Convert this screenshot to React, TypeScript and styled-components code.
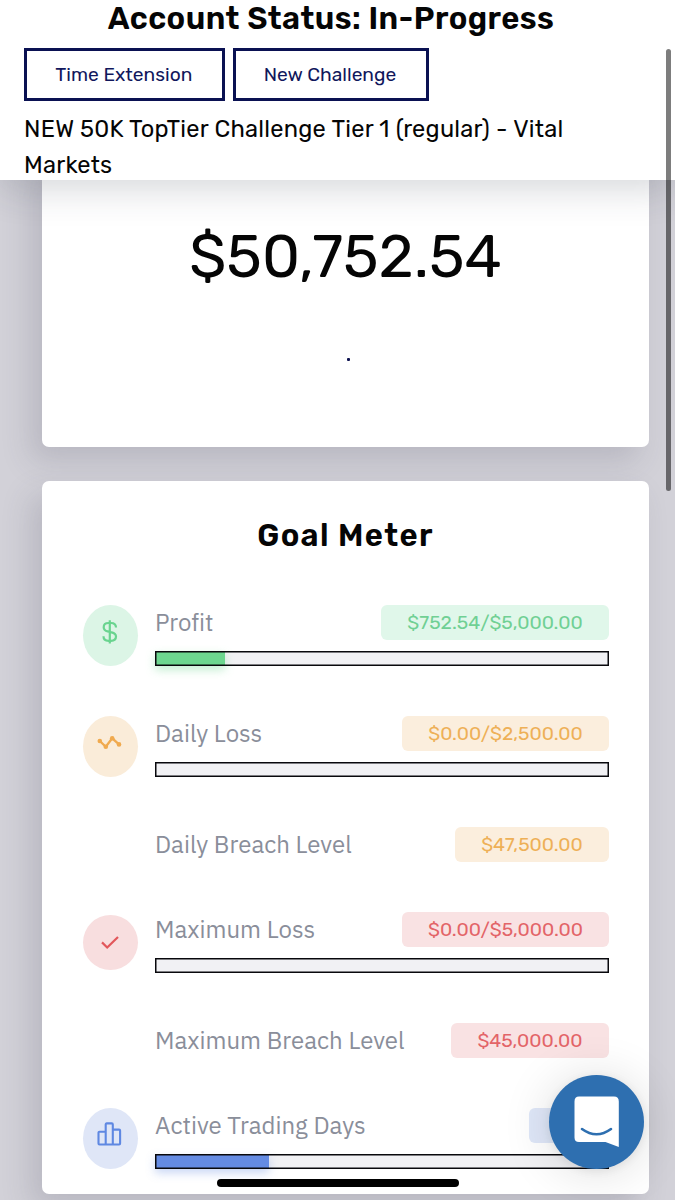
import React from "react";
import styled, { createGlobalStyle } from "styled-components";

const GlobalStyle = createGlobalStyle`
  *, *::before, *::after { box-sizing: border-box; }
  body { margin: 0; background: #d2d1d8; }
`;

const rubik = `Rubik, Roboto, sans-serif`;
const plex = `"IBM Plex Sans", Roboto, sans-serif`;

const Page = styled.div`
  position: relative;
  height: 1200px;
  overflow: hidden;
  display: flex;
  flex-direction: column;
  background: #d2d1d8;
  color: #050505;
  font-family: ${rubik};
`;

const Header = styled.header`
  position: relative;
  z-index: 2;
  flex: none;
  height: 180px;
  padding: 0 24px;
  background: #fff;
  box-shadow: 0 8px 36px rgba(40, 50, 66, 0.2);
`;

const Title = styled.h1`
  margin: 0 0 10.5px -13px;
  height: 37px;
  line-height: 37px;
  font-size: 31px;
  font-weight: 600;
  letter-spacing: 0.44px;
  text-align: center;
  white-space: nowrap;
`;

const Actions = styled.div`
  display: flex;
  gap: 8px;
`;

const OutlineButton = styled.button<{ $width: number }>`
  width: ${(p) => p.$width}px;
  height: 53px;
  padding: 0 1px 0 0;
  border: 3px solid #0a1152;
  background: #fff;
  color: #11175c;
  font: 400 19.2px ${rubik};
  white-space: nowrap;
`;

const AccountName = styled.p`
  margin: 11.5px 0 0;
  width: 600px;
  font-size: 23.6px;
  line-height: 35.5px;
  letter-spacing: 0.24px;
`;

const Content = styled.main`
  flex: none;
  display: flex;
  flex-direction: column;
  gap: 34.5px;
  padding: 0 26px 0 42px;
`;

const Card = styled.section`
  border-radius: 7px;
  background: #fff;
  box-shadow: -11px 14px 30px rgba(64, 66, 88, 0.18);
`;

const BalanceCard = styled(Card)`
  height: 296.5px;
  margin-top: -30px;
  padding-top: 68.5px;
  display: flex;
  flex-direction: column;
  align-items: center;
`;

const Balance = styled.div`
  height: 74px;
  line-height: 75px;
  font-size: 60px;
`;

const Dot = styled.span`
  width: 3px;
  height: 3px;
  margin: 65.5px 0 0 5px;
  border-radius: 1px;
  background: #0d124f;
`;

const GoalCard = styled(Card)`
  height: 712.5px;
  padding: 34px 40px 0 41px;
`;

const GoalTitle = styled.h2`
  margin: 0 0 49px -1px;
  height: 41px;
  line-height: 41px;
  font-size: 31px;
  font-weight: 600;
  letter-spacing: 1.35px;
  text-align: center;
`;

const Goals = styled.div`
  display: flex;
  flex-direction: column;
  gap: 50px;
`;

const GoalRow = styled.div`
  display: grid;
  grid-template-columns: 55px 1fr;
  column-gap: 17px;
  align-items: center;
`;

const Badge = styled.div<{ $bg: string; $round?: boolean }>`
  width: 55px;
  height: ${(p) => (p.$round ? 55 : 61)}px;
  display: flex;
  justify-content: center;
  align-items: center;
  border-radius: 50%;
  background: ${(p) => p.$bg};
  svg { display: block; margin: ${(p) => (p.$round ? 0 : -7)}px 1.5px 0 0; }
`;

const GoalBody = styled.div`
  grid-column: 2;
  display: flex;
  flex-direction: column;
  gap: 11px;
`;

const GoalHead = styled.div`
  display: flex;
  justify-content: space-between;
  height: 35px;
`;

const Label = styled.span`
  font: 400 24px/35px ${plex};
  font-variant-ligatures: none;
  color: #8a8e9a;
  white-space: nowrap;
`;

const Pill = styled.span<{ $bg: string; $fg: string; $width: number }>`
  width: ${(p) => p.$width}px;
  height: 35px;
  border-radius: 6px;
  background: ${(p) => p.$bg};
  color: ${(p) => p.$fg};
  font-size: 19.3px;
  line-height: 35px;
  text-align: center;
  white-space: nowrap;
`;

const Track = styled.div`
  position: relative;
  height: 15px;
  background: #f1f1f4;
  &::after {
    content: "";
    position: absolute;
    inset: 0;
    box-shadow: inset 0 0 0 1.5px #08080c;
  }
`;

const Fill = styled.div<{ $color: string; $glow: string }>`
  height: 100%;
  background: ${(p) => p.$color};
  box-shadow: 0 4px 10px ${(p) => p.$glow};
`;

const ChatButton = styled.button`
  position: absolute;
  z-index: 3;
  left: 549px;
  top: 1074.5px;
  width: 94.5px;
  height: 94px;
  padding: 0;
  border: 0;
  border-radius: 50%;
  background: #2e6fb0;
  box-shadow: 0 2px 10px rgba(0, 0, 0, 0.08), 0 3px 50px rgba(0, 0, 0, 0.14);
  svg { display: block; }
`;

const ScrollThumb = styled.div`
  position: absolute;
  z-index: 4;
  left: 665.5px;
  top: 48.5px;
  width: 5px;
  height: 442.5px;
  border-radius: 3px;
  background: rgba(0, 0, 0, 0.51);
`;

const HomeBar = styled.div`
  position: absolute;
  z-index: 4;
  left: 216.5px;
  top: 1179.4px;
  width: 242px;
  height: 8px;
  border-radius: 4px;
  background: #000;
`;

const DollarIcon = () => (
  <svg width="30" height="30" viewBox="0 0 30 30" fill="none" stroke="#69d48f" strokeWidth="2.2">
    <path d="M14.800 3.300v23.200M21 10.500c0-2.800-2-4.500-5-4.500h-2.500c-2.900 0-4.800 1.700-4.800 4.200 0 2.300 1.500 3.600 4 4.200l3.900 1c2.900.7 4.400 1.900 4.400 4.200 0 2.500-2 4.200-5 4.200h-2.500c-3 0-5-1.700-5-4.500" />
  </svg>
);

const TrendIcon = () => (
  <svg width="30" height="30" viewBox="0 0 30 30" fill="none" stroke="#f0aa4f" strokeWidth="2.3">
    <path d="M4.800 13 10.800 18.800 17.200 10.300 24 16.400" />
    <g fill="#f0aa4f" stroke="none">
      <circle cx="4.800" cy="13" r="2.300" />
      <circle cx="10.800" cy="18.800" r="2.300" />
      <circle cx="17.200" cy="10.300" r="2.300" />
      <circle cx="24" cy="16.400" r="2.300" />
    </g>
  </svg>
);

const CheckIcon = () => (
  <svg width="30" height="30" viewBox="0 0 30 30" fill="none" stroke="#e2575b" strokeWidth="2.2">
    <path d="M7 14.400 12.200 19.500 23 9" />
  </svg>
);

const BarsIcon = () => (
  <svg width="30" height="30" viewBox="0 0 30 30" fill="none" stroke="#5f88e2" strokeWidth="2.1" strokeLinejoin="round">
    <path d="M10.700 24.500V4.400q0-1 1-1h5.100q1 0 1 1V24.500M10.700 11.800H4.500q-1 0-1 1V23.500q0 1 1 1H24.100q1 0 1-1V10.600q0-1-1-1H17.800" />
  </svg>
);

const ChatIcon = () => (
  <svg width="94" height="94" viewBox="0 0 94 94">
    <path
      d="M30 21.500H65Q69.800 21.500 69.800 26.500V72L56.500 67H30Q25.500 67 25.500 62.500V26.500Q25.500 21.500 30 21.500Z"
      fill="#fff"
    />
    <path d="M33 54Q47.500 64.500 62 54" fill="none" stroke="#2e6fb0" strokeWidth="2.600" strokeLinecap="round" />
  </svg>
);

const tones = {
  green: { bg: "#e0f7ea", badge: "#dcf5e6", fg: "#70d094", fill: "#6dd68f", glow: "rgba(109,214,143,.4)" },
  orange: { bg: "#fbeedd", badge: "#faecd9", fg: "#eeb057", fill: "#f0aa4f", glow: "transparent" },
  red: { bg: "#f9e2e3", badge: "#f8dedf", fg: "#e36468", fill: "#e2575b", glow: "transparent" },
  blue: { bg: "#dfe7f8", badge: "#dfe6f7", fg: "#5f88e2", fill: "#648be3", glow: "rgba(100,139,227,.35)" },
};

type Goal = {
  label: string;
  value: string;
  tone: keyof typeof tones;
  width: number;
  progress?: number;
  icon?: React.ReactNode;
  round?: boolean;
};

const goals: Goal[] = [
  { label: "Profit", value: "$752.54/$5,000.00", tone: "green", width: 228, progress: 15.4, icon: <DollarIcon /> },
  { label: "Daily Loss", value: "$0.00/$2,500.00", tone: "orange", width: 207, progress: 0, icon: <TrendIcon /> },
  { label: "Daily Breach Level", value: "$47,500.00", tone: "orange", width: 154 },
  { label: "Maximum Loss", value: "$0.00/$5,000.00", tone: "red", width: 207, progress: 0, icon: <CheckIcon />, round: true },
  { label: "Maximum Breach Level", value: "$45,000.00", tone: "red", width: 158 },
  { label: "Active Trading Days", value: "", tone: "blue", width: 80.5, progress: 25.2, icon: <BarsIcon /> },
];

export default function App() {
  return (
    <Page>
      <GlobalStyle />
      <Header>
        <Title>Account Status: In-Progress</Title>
        <Actions>
          <OutlineButton $width={200.5}>Time Extension</OutlineButton>
          <OutlineButton $width={196}>New Challenge</OutlineButton>
        </Actions>
        <AccountName>NEW 50K TopTier Challenge Tier 1 (regular) - Vital Markets</AccountName>
      </Header>
      <Content>
        <BalanceCard>
          <Balance>$50,752.54</Balance>
          <Dot />
        </BalanceCard>
        <GoalCard>
          <GoalTitle>Goal Meter</GoalTitle>
          <Goals>
            {goals.map((goal) => {
              const tone = tones[goal.tone];
              return (
                <GoalRow key={goal.label}>
                  {goal.icon && (
                    <Badge $bg={tone.badge} $round={goal.round}>
                      {goal.icon}
                    </Badge>
                  )}
                  <GoalBody>
                    <GoalHead>
                      <Label>{goal.label}</Label>
                      <Pill $bg={tone.bg} $fg={tone.fg} $width={goal.width}>
                        {goal.value}
                      </Pill>
                    </GoalHead>
                    {goal.progress !== undefined && (
                      <Track>
                        {goal.progress > 0 && (
                          <Fill $color={tone.fill} $glow={tone.glow} style={{ width: `${goal.progress}%` }} />
                        )}
                      </Track>
                    )}
                  </GoalBody>
                </GoalRow>
              );
            })}
          </Goals>
        </GoalCard>
      </Content>
      <ChatButton aria-label="Open chat">
        <ChatIcon />
      </ChatButton>
      <ScrollThumb />
      <HomeBar />
    </Page>
  );
}
